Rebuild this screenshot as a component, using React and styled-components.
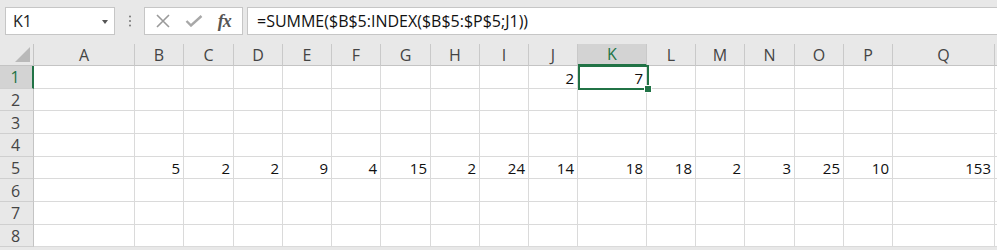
import React from "react";
import styled, { createGlobalStyle } from "styled-components";

const GlobalStyle = createGlobalStyle`
  html, body {
    margin: 0;
    padding: 0;
    background: #ffffff;
  }
  body {
    font-family: "Open Sans", "Noto Sans", sans-serif;
  }
`;

const COLS = [
  { name: "A", w: 101 },
  { name: "B", w: 49 },
  { name: "C", w: 50 },
  { name: "D", w: 49 },
  { name: "E", w: 49 },
  { name: "F", w: 49 },
  { name: "G", w: 50 },
  { name: "H", w: 49 },
  { name: "I", w: 49 },
  { name: "J", w: 49 },
  { name: "K", w: 69 },
  { name: "L", w: 49 },
  { name: "M", w: 49 },
  { name: "N", w: 50 },
  { name: "O", w: 49 },
  { name: "P", w: 49 },
  { name: "Q", w: 102 },
];

const ROW5 = ["", 5, 2, 2, 9, 4, 15, 2, 24, 14, 18, 18, 2, 3, 25, 10, 153];

const data = {
  1: { J: 2, K: 7 },
  5: Object.fromEntries(COLS.map((c, i) => [c.name, ROW5[i]])),
};

const Page = styled.div`
  width: 997px;
  height: 250px;
  overflow: hidden;
  background: #e8e8e8;
`;

const Toolbar = styled.div`
  display: flex;
  align-items: stretch;
  height: 28px;
  padding: 7px 0 9px 5px;
`;

const NameBox = styled.div`
  width: 110px;
  box-sizing: border-box;
  background: #fff;
  border: 1px solid #c6c6c6;
  display: flex;
  align-items: center;
  justify-content: space-between;
  padding: 0 6px 0 7px;
  font-size: 16px;
  color: #222;
`;

const Caret = styled.span`
  width: 0;
  height: 0;
  border-left: 3px solid transparent;
  border-right: 3px solid transparent;
  border-top: 4px solid #555;
  margin-top: 1px;
`;

const Grip = styled.div`
  width: 28px;
  display: flex;
  align-items: center;
  justify-content: center;
  padding-left: 1px;
`;

const FuncBox = styled.div`
  width: 99px;
  box-sizing: border-box;
  background: #fff;
  border: 1px solid #c6c6c6;
  display: flex;
  align-items: center;
  justify-content: space-around;
  padding: 0 4px 0 3px;
`;

const Fx = styled.span`
  font-family: "Liberation Serif", "DejaVu Serif", serif;
  font-style: italic;
  font-weight: bold;
  font-size: 18px;
  color: #555;
  letter-spacing: -1px;
`;

const FormulaBox = styled.div`
  flex: 1;
  margin-left: 4px;
  background: #fff;
  border: 1px solid #c6c6c6;
  border-right: none;
  display: flex;
  align-items: center;
  padding-left: 9px;
  font-size: 16px;
  color: #111;
`;

const Sheet = styled.div`
  position: relative;
  display: grid;
  grid-template-columns: 34px ${COLS.map((c) => `${c.w}px`).join(" ")} 1fr;
  grid-template-rows: 22px repeat(8, 22.67px);
  background: #fff;
`;

const Corner = styled.div`
  position: relative;
  background: #e8e8e8;
  border-right: 1px solid #c4c4c4;
  border-bottom: 1px solid #c4c4c4;
  &::after {
    content: "";
    position: absolute;
    right: 3px;
    bottom: 3px;
    width: 0;
    height: 0;
    border-left: 15px solid transparent;
    border-bottom: 15px solid #b9b9b9;
  }
`;

const ColHead = styled.div`
  box-sizing: border-box;
  background: ${(p) => (p.$active ? "#d3d3d3" : "#e8e8e8")};
  color: ${(p) => (p.$active ? "#217346" : "#444")};
  border-right: 1px solid #c9c9c9;
  border-bottom: ${(p) => (p.$active ? "2px solid #217346" : "1px solid #c4c4c4")};
  font-size: 16px;
  display: flex;
  align-items: center;
  justify-content: center;
`;

const RowHead = styled.div`
  box-sizing: border-box;
  background: ${(p) => (p.$active ? "#d3d3d3" : "#e8e8e8")};
  color: ${(p) => (p.$active ? "#217346" : "#444")};
  border-right: ${(p) => (p.$active ? "2px solid #217346" : "1px solid #c4c4c4")};
  border-bottom: 1px solid #cfcfcf;
  font-size: 16px;
  display: flex;
  align-items: center;
  justify-content: center;
  padding: 1px 2px 0 0;
`;

const Cell = styled.div`
  box-sizing: border-box;
  border-right: 1px solid #dadada;
  border-bottom: 1px solid #dadada;
  font-size: 15px;
  color: #111;
  display: flex;
  align-items: flex-end;
  justify-content: flex-end;
  padding: 0 3px 0 0;
`;

const Selection = styled.div`
  position: absolute;
  left: 578px;
  top: 21px;
  width: 71px;
  height: 25px;
  box-sizing: border-box;
  border: 2px solid #217346;
  pointer-events: none;
`;

const Handle = styled.div`
  position: absolute;
  right: -5px;
  bottom: -5px;
  width: 6px;
  height: 6px;
  background: #217346;
  border: 1px solid #fff;
`;

export default function App() {
  return (
    <Page>
      <GlobalStyle />
      <Toolbar>
        <NameBox>
          K1
          <Caret />
        </NameBox>
        <Grip>
          <svg width="4" height="12" viewBox="0 0 4 12">
            <circle cx="2" cy="1.5" r="1" fill="#777" />
            <circle cx="2" cy="6" r="1" fill="#777" />
            <circle cx="2" cy="10.5" r="1" fill="#777" />
          </svg>
        </Grip>
        <FuncBox>
          <svg width="16" height="14" viewBox="0 0 16 14">
            <path d="M2 1 L14 13 M14 1 L2 13" stroke="#9a9a9a" strokeWidth="1.6" fill="none" />
          </svg>
          <svg width="18" height="12" viewBox="0 0 18 12">
            <path d="M1.5 6 L6 10.5 L16.5 1" stroke="#a8a8a8" strokeWidth="2.4" fill="none" />
          </svg>
          <Fx>fx</Fx>
        </FuncBox>
        <FormulaBox>=SUMME($B$5:INDEX($B$5:$P$5;J1))</FormulaBox>
      </Toolbar>
      <Sheet>
        <Corner />
        {COLS.map((c) => (
          <ColHead key={c.name} $active={c.name === "K"}>
            {c.name}
          </ColHead>
        ))}
        <ColHead />
        {[1, 2, 3, 4, 5, 6, 7, 8].map((r) => (
          <React.Fragment key={r}>
            <RowHead $active={r === 1}>{r}</RowHead>
            {COLS.map((c) => (
              <Cell key={c.name}>{data[r] ? data[r][c.name] : ""}</Cell>
            ))}
            <Cell />
          </React.Fragment>
        ))}
        <Selection>
          <Handle />
        </Selection>
      </Sheet>
    </Page>
  );
}
